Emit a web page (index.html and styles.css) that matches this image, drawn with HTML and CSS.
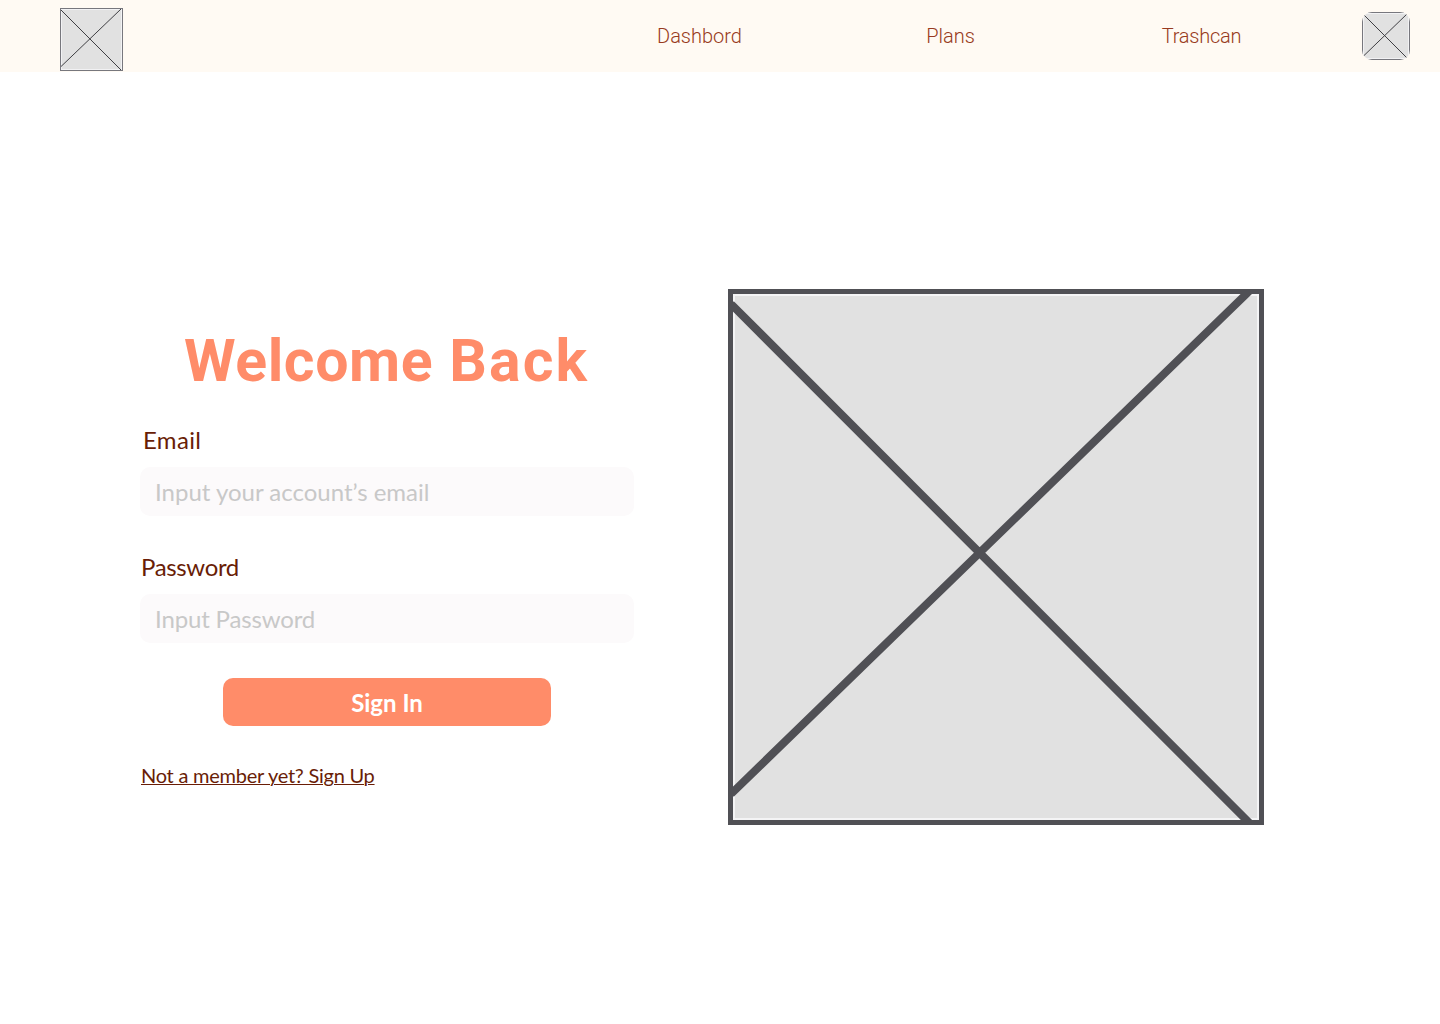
FILE: index.html
```html
<!DOCTYPE html>
<html lang="en">
<head>
<meta charset="utf-8">
<title>Sign In</title>
<link rel="stylesheet" href="styles.css">
</head>
<body>
<header class="topbar">
  <svg class="logo" viewBox="0 0 63 63">
    <rect class="thumb-fill" x=".5" y=".5" width="62" height="62"/>
    <rect class="thumb-glow" x="1.5" y="1.5" width="60" height="60"/>
    <path class="thumb-cross" d="M.5 1.500L61 62M61 1L.5 59"/>
    <rect class="thumb-frame" x=".5" y=".5" width="62" height="62"/>
  </svg>
  <nav class="nav">
    <a class="nav-link">Dashbord</a>
    <a class="nav-link">Plans</a>
    <a class="nav-link nav-trash">Trashcan</a>
  </nav>
  <svg class="avatar" viewBox="0 0 48 48">
    <rect class="thumb-fill" width="48" height="48"/>
    <rect class="thumb-glow" x="1.5" y="1.5" width="45" height="45"/>
    <path class="thumb-cross" d="M1 2L45.500 46.500M45.500 1.500L1 44.500"/>
    <rect class="thumb-frame" x=".5" y=".5" width="47" height="47"/>
  </svg>
</header>
<main class="page">
  <form class="signin">
    <h1 class="title">Welcome <span class="title-end">Back</span></h1>
    <label class="label label-email" for="email">Email</label>
    <input class="field" id="email" type="text" placeholder="Input your account’s email">
    <label class="label label-password" for="password">Password</label>
    <input class="field field-password" id="password" type="password" placeholder="Input Password">
    <button class="submit" type="button">Sign In</button>
    <a class="signup">Not a member yet? Sign Up</a>
  </form>
  <svg class="hero" viewBox="0 0 536 536">
    <rect class="hero-fill" width="536" height="536"/>
    <rect class="hero-glow" x="6" y="6" width="524" height="524"/>
    <path class="hero-cross" d="M3 15L523.500 536M523.500 0L3 505"/>
    <rect class="hero-frame" x="2.500" y="2.500" width="531" height="531"/>
  </svg>
</main>
</body>
</html>
```
FILE: styles.css
```css
* { box-sizing: border-box; }
body {
  margin: 0;
  background: #fff;
  font-family: Lato, sans-serif;
  color: #691d06;
}
.topbar {
  display: flex;
  align-items: flex-start;
  height: 72px;
  background: #fffaf3;
}
.logo { width: 63px; height: 63px; margin: 8px 0 0 60px; }
.nav {
  display: grid;
  grid-template-columns: repeat(3, 251px);
  margin-left: 451px;
}
.nav-link {
  font: 300 20px/72px Roboto, sans-serif;
  text-align: center;
  color: #983a20;
}
.nav-trash { letter-spacing: -.250px; }
.avatar { width: 48px; height: 48px; margin: 12px 0 0 35px; border-radius: 10px; }
.thumb-fill, .hero-fill { fill: #e1e1e1; }
.thumb-glow { fill: none; stroke: #f2f2f4; }
.thumb-cross { fill: none; stroke: #3f3f43; stroke-width: 1; }
.thumb-frame { fill: none; stroke: #77777d; }
.hero-glow { fill: none; stroke: #f4f4f5; stroke-width: 2; }
.hero-cross { fill: none; stroke: #505055; stroke-width: 8; }
.hero-frame { fill: none; stroke: #505055; stroke-width: 5; }
.page { display: flex; align-items: flex-start; padding-left: 140px; }
.signin {
  display: flex;
  flex-direction: column;
  width: 494px;
  padding-top: 253px;
}
.title {
  margin: 0 0 0 44px;
  font: 700 59px/72px Roboto, sans-serif;
  letter-spacing: .550px;
  word-spacing: 1px;
  white-space: nowrap;
  color: #ff8c69;
}
.title-end { letter-spacing: 2.100px; }
.label { font-size: 24px; line-height: 30px; }
.label-email { margin: 28px 0 12px 3px; letter-spacing: .35px; }
.label-password { margin: 36px 0 12.500px 1px; letter-spacing: -.35px; }
.field {
  width: 494px;
  height: 48.500px;
  padding: 1px 15px 0;
  border: 0;
  border-radius: 10px;
  background: #fcfafb;
  font: 400 24px Lato, sans-serif;
}
.field-password { padding-bottom: 1px; letter-spacing: -.150px; }
.field::placeholder { color: #c8c8c8; opacity: 1; }
.submit {
  width: 328px;
  height: 48px;
  margin: 35.500px 0 0 83px;
  padding: 0;
  border: 0;
  border-radius: 10px;
  background: #ff8c69;
  color: #fff;
  font: 700 24px Lato, sans-serif;
}
.signup {
  align-self: flex-start;
  margin: 36px 0 0 1px;
  font-size: 20px;
  line-height: 26px;
  letter-spacing: -.25px;
  text-decoration: underline;
  text-decoration-thickness: 1px;
}
.hero { width: 536px; height: 536px; margin: 217px 0 0 94px; }
```
